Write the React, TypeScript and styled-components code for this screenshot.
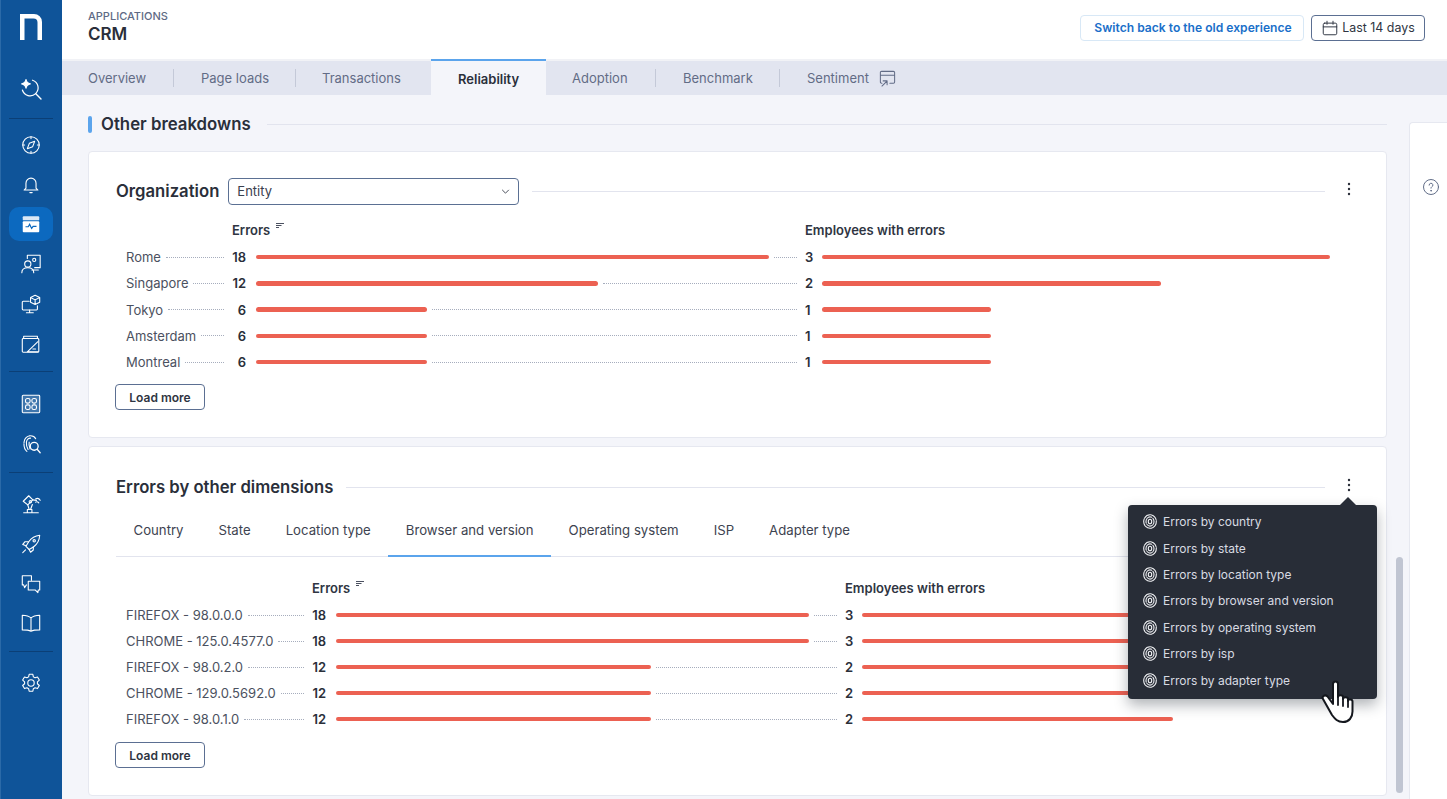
import React from "react";
import styled, { createGlobalStyle } from "styled-components";

const Global = createGlobalStyle`
  html, body { margin: 0; padding: 0; height: 799px; overflow: hidden; }
  body { font-family: Inter, "Liberation Sans", sans-serif; color: #2a2f3a; -webkit-font-smoothing: antialiased; }
  * { box-sizing: border-box; }
`;

const Page = styled.div`
  display: flex;
  width: 1447px;
  height: 799px;
  overflow: hidden;
  background: #f4f5fa;
`;
const Sidebar = styled.nav`
  width: 62px;
  flex: none;
  height: 799px;
  background: #0f5499;
  border-left: 1px solid #2b6aa8;
  display: flex;
  flex-direction: column;
  align-items: center;
  padding-right: 1px;
`;
const Logo = styled.div`
  height: 67px;
  flex: none;
  display: flex;
  align-items: flex-start;
  justify-content: center;
  padding-top: 14px;
`;
const NavDivider = styled.div`
  width: 44px;
  height: 1px;
  background: #0b3f76;
  flex: none;
`;
const NavItem = styled.div<{ $active?: boolean; $h: number }>`
  width: 44px;
  height: ${(p) => p.$h}px;
  flex: none;
  display: flex;
  align-items: center;
  justify-content: center;
  color: #fff;
  border-radius: 10px;
  background: ${(p) => (p.$active ? "#0c69bf" : "transparent")};
`;
const NavGap = styled.div<{ $h: number }>`
  height: ${(p) => p.$h}px;
  flex: none;
`;
const Main = styled.div`
  flex: 1;
  min-width: 0;
  display: flex;
  flex-direction: column;
`;
const Header = styled.header`
  height: 59px;
  flex: none;
  background: #fff;
  display: flex;
  align-items: center;
  justify-content: space-between;
  padding: 0 22px 6px 26px;
`;
const Crumb = styled.div`
  font-size: 11px;
  line-height: 14px;
  color: #5e6a85;
  font-weight: 500;
`;
const AppTitle = styled.div`
  font-size: 17px;
  line-height: 22px;
  font-weight: 600;
  color: #2a2f3a;
`;
const HeaderActions = styled.div`
  display: flex;
  gap: 7px;
  padding-top: 2px;
`;
const SwitchButton = styled.button`
  width: 224px;
  height: 26px;
  background: #fff;
  border: 1px solid #d8e8f6;
  border-radius: 4px;
  font: 600 12.1px Inter, sans-serif;
  color: #1a6fc9;
  padding: 0 0 0 2px;
`;
const DateButton = styled.button`
  width: 114px;
  height: 26px;
  background: #fff;
  border: 1px solid #5b6f92;
  border-radius: 4px;
  font: 400 12.4px Inter, sans-serif;
  color: #2f3542;
  padding: 0;
  display: flex;
  align-items: center;
  justify-content: center;
  gap: 3px;
`;
const TabBar = styled.div`
  height: 36px;
  flex: none;
  display: flex;
  align-items: stretch;
  background: linear-gradient(#f1f2f6 0 2px, #e2e5f0 2px);
`;
const PageTab = styled.div<{ $active?: boolean; $divider?: boolean; $w: number; $pl: number }>`
  width: ${(p) => p.$w}px;
  flex: none;
  position: relative;
  display: flex;
  align-items: center;
  padding-left: ${(p) => p.$pl}px;
  gap: 9px;
  padding-top: 2px;
  font-size: 13px;
  font-weight: ${(p) => (p.$active ? 600 : 400)};
  color: ${(p) => (p.$active ? "#2a2f3a" : "#626c86")};
  background: ${(p) => (p.$active ? "#f4f5fa" : "transparent")};
  border-top: ${(p) => (p.$active ? "2px solid #5ba4ec" : "none")};
  &::after {
    content: "";
    display: ${(p) => (p.$divider ? "block" : "none")};
    position: absolute;
    right: 0;
    top: 10px;
    bottom: 8px;
    width: 1px;
    background: #c4c9d8;
  }
`;
const Content = styled.div`
  flex: 1;
  min-height: 0;
  display: flex;
  position: relative;
  padding: 20px 0 0 26px;
  overflow: hidden;
`;
const Column = styled.div`
  width: 1299px;
  flex: none;
  display: flex;
  flex-direction: column;
`;
const SectionHead = styled.div`
  display: flex;
  align-items: center;
  height: 18px;
  margin-bottom: 18px;
`;
const AccentBar = styled.div`
  width: 4px;
  height: 17px;
  border-radius: 2px;
  background: #5ba4ec;
  margin-right: 9px;
`;
const SectionTitle = styled.h2`
  margin: 0;
  font-size: 16.8px;
  line-height: 18px;
  font-weight: 600;
  color: #2a2f3a;
`;
const Rule = styled.div<{ $ml?: number }>`
  flex: 1;
  height: 1px;
  background: #e2e4ee;
  margin-left: ${(p) => p.$ml ?? 13}px;
`;
const Card = styled.section<{ $h: number }>`
  position: relative;
  flex: none;
  height: ${(p) => p.$h}px;
  background: #fff;
  border: 1px solid #e6e8f0;
  border-radius: 4px;
  margin-bottom: 8px;
  padding: 0 27px 0 26px;
`;
const CardHead = styled.div<{ $top: number }>`
  display: flex;
  align-items: center;
  height: 28px;
  margin-top: ${(p) => p.$top}px;
`;
const CardTitle = styled.h3`
  margin: 0 0 0 1px;
  font-size: 16.7px;
  font-weight: 600;
  color: #2a2f3a;
`;
const SelectBox = styled.div`
  width: 291px;
  height: 27px;
  margin-left: 9px;
  border: 1px solid #5b7093;
  border-radius: 4px;
  display: flex;
  align-items: center;
  justify-content: space-between;
  padding: 0 8px;
  font-size: 13px;
  color: #3a404d;
`;
const Kebab = styled.div`
  width: 47px;
  flex: none;
  display: flex;
  justify-content: center;
  margin-right: -13px;
  margin-top: -5px;
  color: #2a2f3a;
`;
const SubTabs = styled.div`
  display: flex;
  height: 56px;
  padding-top: 2px;
  margin-left: 1px;
  width: 1244px;
  border-bottom: 1px solid #e2e4ee;
`;
const SubTab = styled.div<{ $active?: boolean }>`
  padding: 0 17.5px;
  height: 54px;
  display: flex;
  align-items: center;
  font-size: 13.2px;
  color: #3d4350;
  border-bottom: ${(p) => (p.$active ? "2px solid #5ba4ec" : "none")};
  padding-top: ${(p) => (p.$active ? "2px" : "0")};
`;
const TableWrap = styled.div<{ $top: number }>`
  padding-left: 11px;
  margin-top: ${(p) => p.$top}px;
`;
const Row = styled.div<{ $label: number; $col1: number; $h: number }>`
  display: grid;
  grid-template-columns: ${(p) => p.$label}px 14px ${(p) => p.$col1}px 7px 1fr;
  column-gap: 8px;
  height: ${(p) => p.$h}px;
  align-items: center;
  font-size: 13px;
`;
const HeadRow = styled(Row)`
  padding-bottom: 2px;
`;
const HeadCell = styled.div`
  font-size: 13px;
  font-weight: 600;
  color: #2f3542;
  white-space: nowrap;
  display: flex;
  gap: 5px;
  align-items: flex-start;
`;
const HeadSpan = styled(HeadCell)`
  grid-column: span 2;
`;
const LabelCell = styled.div`
  display: flex;
  align-items: center;
  gap: 5px;
  color: #4b5160;
  white-space: nowrap;
`;
const Dots = styled.div`
  flex: 1;
  min-width: 0;
  border-top: 1px dotted #a6adbd;
`;
const Value = styled.div`
  text-align: right;
  font-weight: 600;
  color: #2a2f3a;
`;
const Value2 = styled(Value)`
  text-align: left;
`;
const BarCell = styled.div`
  display: flex;
  align-items: center;
  gap: 5px;
  margin-left: 2px;
`;
const Bar = styled.div`
  height: 4.5px;
  border-radius: 3px;
  background: #ec6152;
  flex: none;
`;
const LoadMore = styled.button`
  display: block;
  width: 90px;
  height: 26px;
  background: #fff;
  border: 1px solid #5b6f92;
  border-radius: 4px;
  font: 600 12px Inter, sans-serif;
  color: #2f3542;
  padding: 0;
`;
const LoadWrap = styled.div<{ $top: number }>`
  margin-top: ${(p) => p.$top}px;
`;
const Popover = styled.div`
  position: absolute;
  right: 9px;
  top: 58px;
  width: 249px;
  height: 194px;
  background: #282d37;
  border-radius: 4px;
  padding: 3.5px 0 0 15px;
  box-shadow: 0 6px 14px rgba(30, 36, 50, 0.35);
  z-index: 2;
  &::before {
    content: "";
    position: absolute;
    right: 21px;
    top: -8px;
    border-left: 8px solid transparent;
    border-right: 8px solid transparent;
    border-bottom: 8px solid #282d37;
  }
`;
const PopItem = styled.div`
  height: 26.4px;
  display: flex;
  align-items: center;
  gap: 6px;
  font-size: 12px;
  color: #d8dbe2;
  white-space: nowrap;
`;
const Cursor = styled.div`
  position: absolute;
  left: 1232px;
  top: 233px;
  z-index: 3;
  display: flex;
`;
const Scrollbar = styled.div`
  position: absolute;
  left: 1334px;
  top: 462px;
  width: 7px;
  height: 236px;
  border-radius: 4px;
  background: #c0c5d2;
`;
const SidePanel = styled.aside`
  width: 38px;
  height: 700px;
  margin-left: 22px;
  margin-top: 7px;
  flex: none;
  background: #fff;
  border: 1px solid #e6e8f0;
  border-right: none;
  border-radius: 4px 0 0 0;
  padding: 55px 0 0 12px;
  color: #5e6a85;
  display: flex;
  align-items: flex-start;
`;

type IconProps = { children: React.ReactNode; size?: number; sw?: number; view?: number };
const Ico = ({ children, size = 22, sw = 1.2, view = 24 }: IconProps) => (
  <svg width={size} height={size} viewBox={`0 0 ${view} ${view}`} fill="none" stroke="currentColor" strokeWidth={sw} strokeLinecap="round" strokeLinejoin="round">
    {children}
  </svg>
);

const icons = {
  search: (
    <Ico size={24}>
      <path d="M13.500 3.200A8 8 0 1 1 3.400 13" />
      <path d="M16.800 16.800 22 22" strokeWidth={1.4} />
      <path d="M7 2.500c.5 2.700 1.600 3.800 4.300 4.300-2.700.5-3.800 1.600-4.300 4.300-.5-2.700-1.600-3.800-4.300-4.300C5.400 6.300 6.500 5.200 7 2.500Z" fill="currentColor" />
    </Ico>
  ),
  compass: (
    <Ico>
      <circle cx="12" cy="12" r="9" />
      <path d="M12 3v2M12 19v2M3 12h2M19 12h2" />
      <path d="M16 8l-2.200 5.800L8 16l2.200-5.800L16 8Z" />
    </Ico>
  ),
  bell: (
    <Ico>
      <path d="M6.500 15.500V10a5.500 5.500 0 0 1 11 0v5.500l2 2H4.500l2-2Z" />
      <path d="M10.800 20.300h2.400" strokeWidth={1.4} />
    </Ico>
  ),
  activity: (
    <svg width="22" height="22" viewBox="0 0 24 24">
      <rect x="3" y="3.500" width="18" height="4.500" rx="1" fill="#fff" opacity=".85" />
      <rect x="3" y="9" width="18" height="12" rx="1" fill="#fff" />
      <path d="M6 15h3l1.500-2.600 2.200 4.400 1.600-2.300H18" fill="none" stroke="#0c69bf" strokeWidth="1.300" />
    </svg>
  ),
  present: (
    <Ico>
      <path d="M8 6V2.500h14V16h-6" />
      <circle cx="8.500" cy="12" r="3.400" />
      <path d="M2 21.500c0-3.600 2.800-5.400 6.500-5.400s6.500 1.800 6.500 5.400" />
      <circle cx="15.500" cy="7.500" r="1.700" />
      <path d="M13 18.500h7" />
    </Ico>
  ),
  monitor: (
    <Ico>
      <path d="M10 9H3.500a1 1 0 0 0-1 1v7.500a1 1 0 0 0 1 1H18a1 1 0 0 0 1-1V14" />
      <path d="M10.500 18.500v2.500M7 21.500h7.500" />
      <path d="M16.500 2.500 21.500 5v5l-5 2.500-5-2.500V5l5-2.500ZM11.500 5l5 2.500L21.500 5M16.500 7.500v5" />
    </Ico>
  ),
  report: (
    <Ico>
      <path d="M4 6V3.500h15V6" />
      <rect x="2.500" y="6" width="18" height="15" rx="1" />
      <path d="M19.500 9.500 8 20.500h12" />
      <path d="M14 17.500h3" />
    </Ico>
  ),
  grid: (
    <svg width="22" height="22" viewBox="0 0 24 24" fill="none" stroke="#fff" strokeWidth="1.200">
      <rect x="2.500" y="2.500" width="19" height="19" rx="1" fill="#fff" fillOpacity=".2" />
      <rect x="6" y="6" width="5" height="5" rx="2" />
      <rect x="13" y="6" width="5" height="5" rx="2" />
      <rect x="6" y="13" width="5" height="5" rx="2" />
      <rect x="13" y="13" width="5" height="5" rx="2" />
    </svg>
  ),
  print: (
    <Ico>
      <path d="M7.500 20C4.500 17.500 4 13.500 4.500 9.500 5 5.500 8 3 11.500 3c2.500 0 4.600 1.200 5.600 3.200" strokeDasharray="9 1.200" />
      <path d="M8.800 18c-1.500-2.500-2-5.500-1.800-8C7.300 7.500 9.300 5.500 11.500 5.600" />
      <path d="M11 17.500C10 15 9.500 12 10 10" />
      <circle cx="15.500" cy="14.500" r="4.300" strokeWidth="1.400" />
      <path d="M18.700 17.700 22 21.500" strokeWidth="1.400" />
    </Ico>
  ),
  robot: (
    <Ico>
      <path d="M4 21.500h16M8 21.500v-3.500h5v3.500" />
      <path d="M3.500 9 9.500 3l4.500 4.500-5.500 5.500-5-4Z" />
      <path d="M8.500 13 10 18M13.500 12.500 11.500 18" />
      <circle cx="11.300" cy="9.500" r="1.300" />
      <path d="M14 7.500 18 8" />
      <path d="M17 6.500c2-1 4-.3 5 1.500M17 10c1.200-.8 2.500-.5 3.500.8" />
    </Ico>
  ),
  rocket: (
    <Ico>
      <path d="M21.500 2.500c-5 .5-9 2.800-12 7l-3 5 3.500 3.500 5-3c4-3 6.200-7.500 6.500-12.500Z" />
      <path d="M9 9.500H5.500L3 12.500l3.500 1.500M14.500 15v3.500l-3 2.500-1.500-3" />
      <path d="M6 18.500 3 21.500" />
      <circle cx="15.500" cy="8.500" r="1.300" />
    </Ico>
  ),
  chat: (
    <Ico>
      <path d="M12.500 8V3H2.500v10H4l1 3 2-3" />
      <path d="M9 9h12.500v9.500H20l-.5 3-3-3H9V9Z" />
    </Ico>
  ),
  book: (
    <Ico>
      <path d="M12 6.500C10 4.500 6 3.500 2.500 3.500v16c3.500 0 7.500.5 9.500 1.500 2-1 6-1.500 9.500-1.500v-16c-3.500 0-7.500 1-9.500 3ZM12 6.500V21" />
    </Ico>
  ),
  gear: (
    <Ico>
      <path d="M10 2.500h4l.6 2.800 1.800 1 2.700-.9 2 3.400-2.100 1.900v2.100l2.100 1.900-2 3.400-2.700-.9-1.800 1-.6 2.800h-4l-.6-2.800-1.800-1-2.700.9-2-3.400 2.100-1.900v-2.100L2.900 8.800l2-3.400 2.700.9 1.800-1L10 2.500Z" />
      <circle cx="12" cy="12" r="3.500" />
    </Ico>
  ),
};

const Fingerprint = () => (
  <svg width="14" height="15" viewBox="0 0 14 15" fill="none" stroke="#f0f1f4" strokeWidth="1.100" strokeLinecap="round">
    <ellipse cx="7" cy="7.500" rx="6.300" ry="6.800" strokeDasharray="7 1" />
    <ellipse cx="7" cy="7.500" rx="4" ry="4.600" strokeDasharray="10 1.500" />
    <ellipse cx="7" cy="7.500" rx="1.700" ry="2.300" />
  </svg>
);

const SortIcon = () => (
  <svg width="10" height="8" viewBox="0 0 10 8" stroke="#4b5160" strokeWidth="1">
    <path d="M1 1.500h8M1 3.500h5.500M1 5.500h3" />
  </svg>
);

const KebabIcon = () => (
  <svg width="4" height="14" viewBox="0 0 4 14" fill="currentColor">
    <circle cx="2" cy="2" r="1.200" />
    <circle cx="2" cy="7" r="1.200" />
    <circle cx="2" cy="12" r="1.200" />
  </svg>
);

type RowData = { name: string; a: string; b: string; wa: number; wb: number };
const org: RowData[] = [
  { name: "Rome", a: "18", b: "3", wa: 513, wb: 508 },
  { name: "Singapore", a: "12", b: "2", wa: 342, wb: 339 },
  { name: "Tokyo", a: "6", b: "1", wa: 171, wb: 169 },
  { name: "Amsterdam", a: "6", b: "1", wa: 171, wb: 169 },
  { name: "Montreal", a: "6", b: "1", wa: 171, wb: 169 },
];
const dims: RowData[] = [
  { name: "FIREFOX - 98.0.0.0", a: "18", b: "3", wa: 473, wb: 467 },
  { name: "CHROME - 125.0.4577.0", a: "18", b: "3", wa: 473, wb: 467 },
  { name: "FIREFOX - 98.0.2.0", a: "12", b: "2", wa: 315, wb: 311 },
  { name: "CHROME - 129.0.5692.0", a: "12", b: "2", wa: 315, wb: 311 },
  { name: "FIREFOX - 98.0.1.0", a: "12", b: "2", wa: 315, wb: 311 },
];

const Table = ({ rows, label, col1, rowH }: { rows: RowData[]; label: number; col1: number; rowH: number }) => (
  <>
    <HeadRow $label={label} $col1={col1} $h={27}>
      <div />
      <HeadSpan>
        Errors <SortIcon />
      </HeadSpan>
      <HeadSpan>Employees with errors</HeadSpan>
    </HeadRow>
    {rows.map((r) => (
      <Row key={r.name} $label={label} $col1={col1} $h={rowH}>
        <LabelCell>
          {r.name}
          <Dots />
        </LabelCell>
        <Value>{r.a}</Value>
        <BarCell>
          <Bar style={{ width: r.wa }} />
          <Dots />
        </BarCell>
        <Value2>{r.b}</Value2>
        <BarCell>
          <Bar style={{ width: r.wb }} />
        </BarCell>
      </Row>
    ))}
  </>
);

const pageTabs = [
  { t: "Overview", w: 112, pl: 26, d: true },
  { t: "Page loads", w: 122, pl: 27, d: true },
  { t: "Transactions", w: 135, pl: 26, d: false },
  { t: "Reliability", w: 115, pl: 27, a: true },
  { t: "Adoption", w: 110, pl: 26, d: true },
  { t: "Benchmark", w: 124, pl: 27, d: true },
];
const subTabs = ["Country", "State", "Location type", "Browser and version", "Operating system", "ISP", "Adapter type"];
const popItems = ["Errors by country", "Errors by state", "Errors by location type", "Errors by browser and version", "Errors by operating system", "Errors by isp", "Errors by adapter type"];

export default function App() {
  return (
    <Page>
      <Global />
      <Sidebar>
        <Logo>
          <svg width="22" height="26" viewBox="0 0 22 26">
            <path d="M0 0h14a8 8 0 0 1 8 8v18h-4.500V8.500a4 4 0 0 0-4-4H4.500V26H0Z" fill="#fff" />
          </svg>
        </Logo>
        <NavItem $h={44}>{icons.search}</NavItem>
        <NavGap $h={7} />
        <NavDivider />
        <NavGap $h={6} />
        <NavItem $h={40}>{icons.compass}</NavItem>
        <NavItem $h={40}>{icons.bell}</NavItem>
        <NavGap $h={2} />
        <NavItem $h={34} $active>{icons.activity}</NavItem>
        <NavGap $h={3} />
        <NavItem $h={40}>{icons.present}</NavItem>
        <NavItem $h={40}>{icons.monitor}</NavItem>
        <NavItem $h={40}>{icons.report}</NavItem>
        <NavGap $h={7} />
        <NavDivider />
        <NavGap $h={12} />
        <NavItem $h={40}>{icons.grid}</NavItem>
        <NavItem $h={40}>{icons.print}</NavItem>
        <NavGap $h={8} />
        <NavDivider />
        <NavGap $h={11} />
        <NavItem $h={40}>{icons.robot}</NavItem>
        <NavItem $h={40}>{icons.rocket}</NavItem>
        <NavItem $h={39}>{icons.chat}</NavItem>
        <NavItem $h={39}>{icons.book}</NavItem>
        <NavGap $h={9} />
        <NavDivider />
        <NavGap $h={11} />
        <NavItem $h={40}>{icons.gear}</NavItem>
      </Sidebar>
      <Main>
        <Header>
          <div>
            <Crumb>APPLICATIONS</Crumb>
            <AppTitle>CRM</AppTitle>
          </div>
          <HeaderActions>
            <SwitchButton>Switch back to the old experience</SwitchButton>
            <DateButton>
              <Ico size={18} sw={1.3}>
                <rect x="3" y="5.500" width="18" height="15.500" rx="2" />
                <path d="M3 10.500h18M8 3v4M16 3v4" />
              </Ico>
              Last 14 days
            </DateButton>
          </HeaderActions>
        </Header>
        <TabBar>
          {pageTabs.map((p) => (
            <PageTab key={p.t} $w={p.w} $pl={p.pl} $active={p.a} $divider={p.d}>
              {p.t}
            </PageTab>
          ))}
          <PageTab $w={127} $pl={27}>
            Sentiment
            <Ico size={19} sw={1.3}>
              <path d="M5 18H4.500a1.500 1.500 0 0 1-1.500-1.500v-12A1.500 1.500 0 0 1 4.500 3h15A1.500 1.500 0 0 1 21 4.500v12a1.500 1.500 0 0 1-1.500 1.500H15M3 8h18" />
              <path d="M5 21.500l6-6M6.500 15H11.500v5" />
            </Ico>
          </PageTab>
        </TabBar>
        <Content>
          <Column>
            <SectionHead>
              <AccentBar />
              <SectionTitle>Other breakdowns</SectionTitle>
              <Rule $ml={16} />
            </SectionHead>
            <Card $h={287}>
              <CardHead $top={25}>
                <CardTitle>Organization</CardTitle>
                <SelectBox>
                  Entity
                  <svg width="9" height="5" viewBox="0 0 10 6" fill="none" stroke="#3a404d" strokeWidth="1.100">
                    <path d="M1 1l4 4 4-4" />
                  </svg>
                </SelectBox>
                <Rule />
                <Kebab>
                  <KebabIcon />
                </Kebab>
              </CardHead>
              <TableWrap $top={12}>
                <Table rows={org} label={98} col1={543} rowH={26.25} />
              </TableWrap>
              <LoadWrap $top={9}>
                <LoadMore>Load more</LoadMore>
              </LoadWrap>
            </Card>
            <Card $h={350}>
              <CardHead $top={26}>
                <CardTitle>Errors by other dimensions</CardTitle>
                <Rule />
                <Kebab>
                  <KebabIcon />
                </Kebab>
              </CardHead>
              <SubTabs>
                {subTabs.map((s, i) => (
                  <SubTab key={s} $active={i === 3}>
                    {s}
                  </SubTab>
                ))}
              </SubTabs>
              <TableWrap $top={18}>
                <Table rows={dims} label={178} col1={503} rowH={26} />
              </TableWrap>
              <LoadWrap $top={10}>
                <LoadMore>Load more</LoadMore>
              </LoadWrap>
              <Popover>
                {popItems.map((t) => (
                  <PopItem key={t}>
                    <Fingerprint />
                    {t}
                  </PopItem>
                ))}
              </Popover>
              <Cursor>
                <svg width="34" height="44" viewBox="0 0 34 44">
                  <path
                    d="M12 4c0-3.500 5-3.500 5 0v13c0-2.500 5-2.500 5 0v2c0-2.500 5-2.500 5 0v2c0-2.200 4.500-2.200 4.500 .5v10c0 6-3.500 10.500-9.500 10.500-5.500 0-8-3-11-7L2 19c-1.500-2.500 2-5 4.500-2.500L12 24V4Z"
                    fill="#fff"
                    stroke="#14171d"
                    strokeWidth="2"
                    strokeLinejoin="round"
                  />
                  <path d="M17 17v8M22 19v7M27 21v6" stroke="#14171d" strokeWidth="1.800" fill="none" strokeLinecap="round" />
                </svg>
              </Cursor>
            </Card>
          </Column>
          <Scrollbar />
          <SidePanel>
            <Ico size={18} sw={1.3}>
              <circle cx="12" cy="12" r="10" />
              <path d="M9.500 9.500a2.500 2.500 0 1 1 3.500 2.300c-.7.400-1 1-1 1.700" />
              <circle cx="12" cy="17" r=".5" />
            </Ico>
          </SidePanel>
        </Content>
      </Main>
    </Page>
  );
}
